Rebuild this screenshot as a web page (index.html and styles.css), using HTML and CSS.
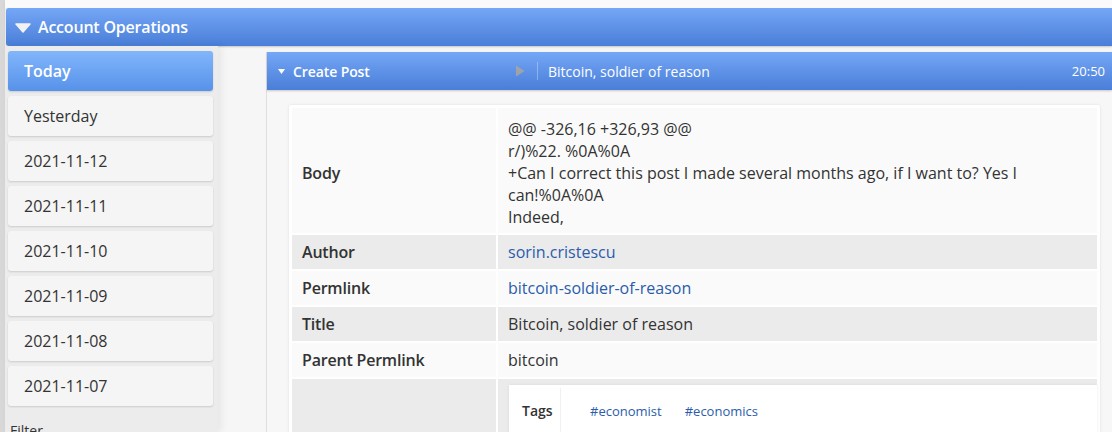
FILE: index.html
```html
<!DOCTYPE html>
<html>
<head>
<meta charset="utf-8">
<link rel="stylesheet" href="styles.css">
</head>
<body>
<div class="page">
  <div class="edge"></div>
  <div class="main">
    <div class="topstrip"></div>
    <div class="section-head">
      <svg class="tri-big" width="16" height="10" viewBox="0 0 16 10"><path d="M1 1 L15 1 L8 9 Z" fill="#f2f2f2" stroke="#f2f2f2" stroke-width="1.5" stroke-linejoin="round"/></svg>
      <span>Account Operations</span>
    </div>
    <div class="body-row">
      <div class="sidebar">
        <div class="day active">Today</div>
        <div class="day">Yesterday</div>
        <div class="day">2021-11-12</div>
        <div class="day">2021-11-11</div>
        <div class="day">2021-11-10</div>
        <div class="day">2021-11-09</div>
        <div class="day">2021-11-08</div>
        <div class="day">2021-11-07</div>
        <div class="filter">Filter</div>
      </div>
      <div class="spacer"></div>
      <div class="panel">
        <div class="op-head">
          <div class="op-left">
            <svg class="tri-small" width="7" height="5" viewBox="0 0 7 5"><path d="M0 0 L7 0 L3.5 5 Z" fill="#ffffff"/></svg>
            <span class="op-name">Create Post</span>
          </div>
          <svg class="play" width="10" height="12" viewBox="0 0 10 12"><path d="M1 0.5 L9.5 6 L1 11.5 Z" fill="#b0a896" opacity="0.8"/></svg>
          <span class="sep"></span>
          <span class="op-title">Bitcoin, soldier of reason</span>
          <span class="op-time">20:50</span>
        </div>
        <div class="op-body">
          <div class="card">
            <table class="details">
              <tr class="light">
                <td class="lbl">Body</td>
                <td class="val">@@ -326,16 +326,93 @@<br>r/)%22. %0A%0A<br>+Can I correct this post I made several months ago, if I want to? Yes I<br>can!%0A%0A<br>Indeed,</td>
              </tr>
              <tr class="dark">
                <td class="lbl">Author</td>
                <td class="val"><a class="lnk">sorin.cristescu</a></td>
              </tr>
              <tr class="light">
                <td class="lbl">Permlink</td>
                <td class="val"><a class="lnk">bitcoin-soldier-of-reason</a></td>
              </tr>
              <tr class="dark">
                <td class="lbl">Title</td>
                <td class="val">Bitcoin, soldier of reason</td>
              </tr>
              <tr class="light">
                <td class="lbl">Parent Permlink</td>
                <td class="val">bitcoin</td>
              </tr>
              <tr class="dark">
                <td class="lbl"></td>
                <td class="val meta-cell">
                  <div class="meta-card">
                    <div class="meta-row">
                      <div class="meta-lbl">Tags</div>
                      <div class="meta-val"><a class="tag">#economist</a><a class="tag">#economics</a></div>
                    </div>
                  </div>
                </td>
              </tr>
            </table>
          </div>
        </div>
      </div>
    </div>
  </div>
</div>
</body>
</html>
```

FILE: styles.css
```css
html, body {
  margin: 0;
  padding: 0;
  height: 100%;
  overflow: hidden;
}
body {
  font-family: "Open Sans", "Liberation Sans", sans-serif;
  color: #333;
  background: #f6f6f6;
}
.page {
  display: flex;
  height: 432px;
}
.edge {
  width: 5px;
  flex: none;
  background: #d8d8d8;
}
.main {
  flex: 1;
  display: flex;
  flex-direction: column;
  min-width: 0;
}
.topstrip {
  height: 8px;
  flex: none;
  background: #fafafa;
  box-shadow: 0 1px 3px rgba(0,0,0,0.08);
}
.section-head {
  margin-left: 1px;
  height: 38px;
  flex: none;
  display: flex;
  align-items: center;
  gap: 7px;
  padding-left: 9px;
  border-radius: 3px 0 0 3px;
  background: linear-gradient(#74a7f6, #4a7ed8);
  color: #fff;
  font-weight: 600;
  font-size: 16px;
  letter-spacing: -0.2px;
  box-shadow: 0 1px 2px rgba(0,0,0,0.2);
}
.tri-big { margin-top: 1px; }
.body-row {
  flex: 1;
  display: flex;
  min-height: 0;
}
.sidebar {
  width: 213px;
  flex: none;
  background: #ececec;
  box-shadow: 3px 0 8px rgba(0,0,0,0.07);
  padding: 5px 0 0 3px;
  box-sizing: border-box;
  display: flex;
  flex-direction: column;
  gap: 5px;
  overflow: hidden;
}
.day {
  flex: none;
  width: 205px;
  height: 40px;
  box-sizing: border-box;
  padding-left: 16px;
  display: flex;
  align-items: center;
  font-size: 16px;
  color: #333;
  background: #f5f5f5;
  border-radius: 3px;
  box-shadow: 0 1px 2px rgba(0,0,0,0.14);
}
.day.active {
  background: linear-gradient(#82b6fb, #5792ea);
  color: #fff;
  font-weight: 600;
}
.filter {
  flex: none;
  margin-top: 10px;
  padding-left: 2px;
  font-size: 14px;
  color: #333;
}
.spacer {
  width: 48px;
  flex: none;
}
.panel {
  flex: 1;
  min-width: 0;
  border-left: 1px solid #dedede;
  background: #f7f7f7;
  margin-top: 6px;
  display: flex;
  flex-direction: column;
}
.op-head {
  height: 38px;
  flex: none;
  display: flex;
  align-items: center;
  background: linear-gradient(#74a7f6, #4a7ed8);
  color: #fff;
  font-size: 14px;
  box-shadow: 0 1px 2px rgba(0,0,0,0.2);
  padding: 0 7px 0 11px;
}
.op-left {
  width: 237px;
  display: flex;
  align-items: center;
  gap: 8px;
}
.op-name {
  font-weight: 600;
  letter-spacing: -0.1px;
}
.play { margin-right: 12px; }
.sep {
  width: 1px;
  height: 18px;
  background: rgba(255,255,255,0.3);
  margin-right: 10px;
}
.op-title { flex: 1; }
.op-time { font-size: 13px; }
.op-body {
  padding: 15px 12px 0 22px;
}
.card {
  background: #fff;
  padding: 3px;
  border-radius: 2px;
  box-shadow: 0 0 3px rgba(0,0,0,0.1);
}
.details {
  width: 100%;
  border-collapse: separate;
  border-spacing: 0;
  font-size: 16px;
  line-height: 22px;
}
.details td {
  padding: 6px 10px;
  vertical-align: middle;
}
.details tr.light td { background: #fafafa; }
.details tr.dark td { background: #ebebeb; }
.details tr + tr td { border-top: 2px solid #fff; }
.details td.lbl {
  width: 184px;
  font-weight: 600;
  letter-spacing: -0.2px;
  border-right: 2px solid #fff;
}
.details tr:first-child td { padding-top: 10px; padding-bottom: 5px; }
.lnk, .tag {
  color: #2b5cab;
  text-decoration: none;
}
.details td.meta-cell {
  padding: 6px 0 0 11px;
}
.meta-card {
  background: #fff;
  box-shadow: 0 0 3px rgba(0,0,0,0.08);
  padding: 3px;
}
.meta-row {
  display: flex;
  align-items: center;
  height: 46px;
}
.meta-lbl {
  width: 49px;
  box-sizing: border-box;
  padding-left: 10px;
  font-size: 14px;
  font-weight: 600;
  border-right: 1px solid #f0f0f0;
  align-self: stretch;
  display: flex;
  align-items: center;
}
.meta-val {
  padding-left: 29px;
  display: flex;
  gap: 23px;
  font-size: 13px;
}
```
